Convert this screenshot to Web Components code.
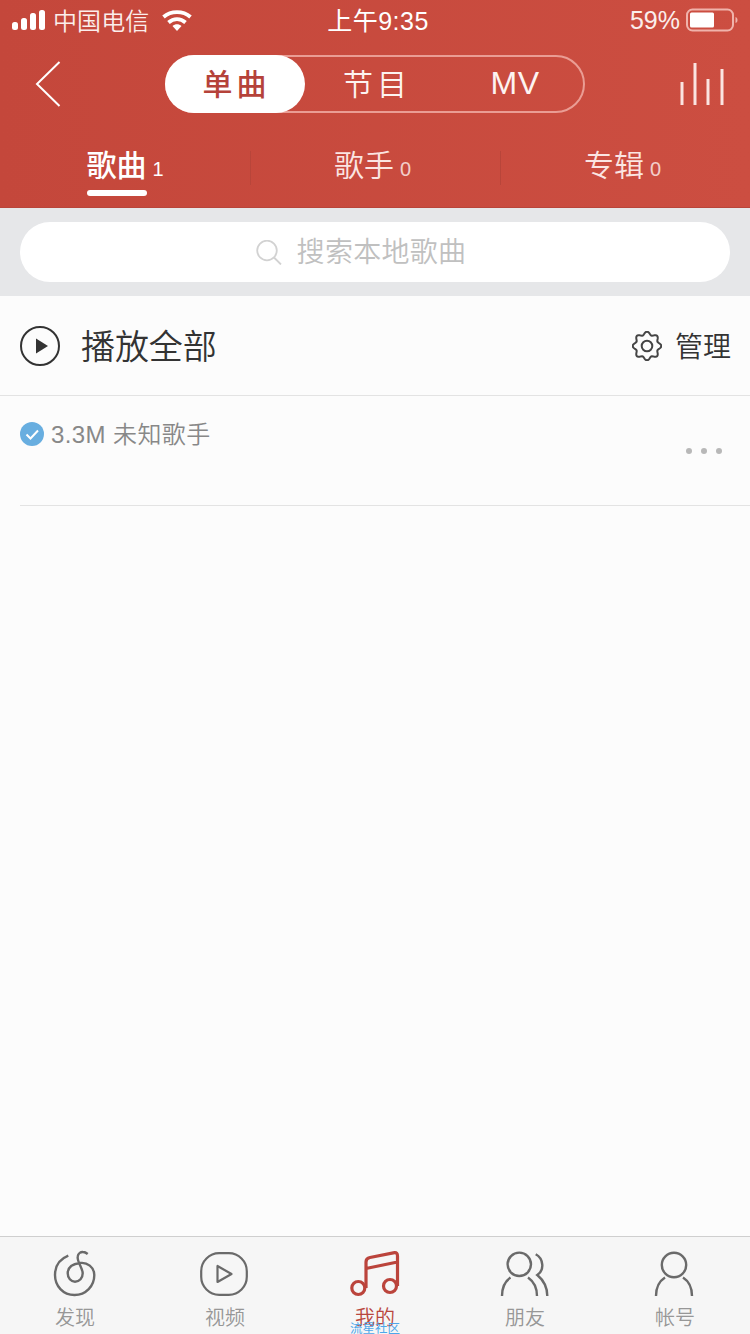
<!DOCTYPE html>
<html lang="zh"><head><meta charset="utf-8">
<style>
html,body{margin:0;padding:0}
body{width:750px;height:1334px;overflow:hidden;background:#fcfcfc;font-family:"Liberation Sans","Noto Sans CJK SC",sans-serif;font-weight:350}
</style></head><body>
<music-page></music-page>
<script>
const FONT = '"Liberation Sans","Noto Sans CJK SC",sans-serif';
function def(name, html){
  customElements.define(name, class extends HTMLElement{
    constructor(){super();this.attachShadow({mode:'open'}).innerHTML=html(this);}
  });
}
function gearPath(){
  let d='';
  for(let i=0;i<=160;i++){
    const t=i/160*Math.PI*2, r=12.8+1.5*Math.cos(8*t);
    d+=(i?'L':'M')+(15+r*Math.sin(t)).toFixed(2)+' '+(15-r*Math.cos(t)).toFixed(2);
  }
  return d+'Z';
}
def('status-bar',()=>`<style>
:host{display:grid;grid-template-columns:1fr auto 1fr;align-items:center;height:38px;color:#fff;font-size:24px;font-family:${FONT};padding:0 12px;box-sizing:border-box;margin-top:1px}
.l,.r{display:flex;align-items:center}
.r{justify-content:flex-end}
.c{font-size:25px;letter-spacing:.5px;position:relative;left:3px;top:-1px;font-weight:400}
.n{font-size:25px;margin-right:6px;color:#fbeeec}
.carrier{margin-left:7px;color:#fbeeec;letter-spacing:.1px;position:relative;top:-1px}
svg{display:block}
</style>
<div class="l"><svg width="34" height="20" viewBox="0 0 34 20"><rect x="0" y="12" width="6" height="8" rx="2.500" fill="#fff"/><rect x="9" y="8" width="6" height="12" rx="2.500" fill="#fff"/><rect x="18" y="3" width="6" height="17" rx="2.500" fill="#fff"/><rect x="27" y="0" width="6" height="20" rx="2.500" fill="#fff"/></svg>
<span class="carrier">中国电信</span>
<svg style="margin-left:13px;margin-top:-1px" width="30" height="22" viewBox="0 0 30 22" fill="none" stroke="#fff" stroke-width="3.800"><path d="M1.500 8C9 1.500 21 1.500 28.500 8"/><path d="M6.500 13.500C11.500 9 18.500 9 23.500 13.500"/><path d="M10.500 17 15 22 19.500 17C17 14.600 13 14.600 10.500 17Z" fill="#fff" stroke="none"/></svg></div>
<div class="c">上午9:35</div>
<div class="r"><span class="n">59%</span><svg width="52" height="24" viewBox="0 0 52 24"><rect x="1" y="1.500" width="46" height="21" rx="5.500" fill="none" stroke="#f0b3ab" stroke-width="2"/><rect x="4" y="4.500" width="24" height="15" rx="1.500" fill="#fff"/><path d="M49.500 9c1.500.5 2 1.500 2 3s-.5 2.500-2 3z" fill="#f0b3ab"/></svg></div>`);

def('seg-control',()=>`<style>
:host{display:flex;width:420px;height:58px;box-sizing:border-box;border:2px solid #ea9d94;border-radius:29px;font-family:${FONT};color:#fdf3f1;font-size:30px;position:relative}
div{display:flex;flex:none;width:140px;box-sizing:border-box;align-items:center;justify-content:center;letter-spacing:4px;margin:-2px 0;padding:0 0 4px 4px}
.on{background:#fff;color:#b5423a;border-radius:29px;margin-left:-2px;font-weight:500;padding:0 0 5px 3px}
.mv{font-size:32px;letter-spacing:.5px;padding-left:0;padding-bottom:2px}
</style><div class="on">单曲</div><div>节目</div><div class="mv">MV</div>`);

def('nav-bar',()=>`<style>
:host{display:flex;align-items:center;height:58px;margin-top:16px}
svg{display:block;flex:none}
.back{margin-left:34px;margin-right:104px}
.eq{margin-left:95px}
</style><svg class="back" width="27" height="46" viewBox="0 0 27 46" fill="none" stroke="#fff" stroke-width="2"><path d="M25.500 1 3 23 25.500 45"/></svg>
<seg-control></seg-control>
<svg class="eq" width="44" height="44" viewBox="0 0 44 44" stroke="#fbe4e1" stroke-width="3"><path d="M2 20V43M15 1V43M28 17V43M42 7V43"/></svg>`);

def('sub-tab',(el)=>`<style>
:host{display:block;height:68px;position:relative;font-family:${FONT};color:#fbe5e2}
.t{display:flex;justify-content:center;align-items:baseline;padding:6px 5px 0 0;line-height:40px;font-size:30px}
.n{font-size:20px;margin-left:6px;opacity:.85}
:host([active]) .t{color:#fff;font-weight:500;padding-right:0}
:host([active]) .n{font-weight:400;opacity:1}
.u{display:none;position:absolute;left:87px;top:50px;width:60px;height:6px;border-radius:3px;background:#fff}
:host([active]) .u{display:block}
.d{position:absolute;right:-1px;top:11px;width:1px;height:34px;background:#b8453a}
:host([last]) .d{display:none}
</style><div class="t"><span>${el.getAttribute('label')}</span><span class="n">${el.getAttribute('count')}</span></div><div class="u"></div><div class="d"></div>`);

def('sub-tabs',()=>`<style>:host{display:grid;grid-template-columns:repeat(3,1fr);margin-top:27px}</style>
<sub-tab active label="歌曲" count="1"></sub-tab><sub-tab label="歌手" count="0"></sub-tab><sub-tab last label="专辑" count="0"></sub-tab>`);

def('app-header',()=>`<style>:host{display:block;height:208px;box-sizing:border-box;border-bottom:1px solid #b9453a;background:linear-gradient(90deg,#c4473b,#cc4e41);overflow:hidden}</style>
<status-bar></status-bar><nav-bar></nav-bar><sub-tabs></sub-tabs>`);

def('search-box',()=>`<style>
:host{display:block;background:#e6e7e9;padding:14px 20px}
.b{height:60px;border-radius:30px;background:#fff;display:flex;align-items:center;justify-content:center;gap:15px;color:#c0c0c0;font-family:${FONT};font-size:28px;padding-right:28px}
span{letter-spacing:.3px;padding-bottom:5px}
svg{display:block;margin-top:1px}
</style><div class="b"><svg width="26" height="25" viewBox="0 0 26 25" fill="none" stroke="#d2d2d2" stroke-width="1.800"><circle cx="11" cy="10.500" r="9.800"/><path d="M18 17.500 25 24.500"/></svg><span>搜索本地歌曲</span></div>`);

def('play-row',()=>`<style>
:host{display:flex;align-items:center;height:100px;box-sizing:border-box;border-bottom:1px solid #e3e3e3;padding:0 19px 0 20px;font-family:${FONT};color:#333}
.t{font-size:34px;margin-left:21px;flex:1;padding-bottom:3px;letter-spacing:-.1px}
.m{font-size:28px;margin-left:13px;padding-bottom:2px}
svg{display:block}
</style><svg width="40" height="40" viewBox="0 0 40 40"><circle cx="20" cy="20" r="19" fill="none" stroke="#333" stroke-width="2"/><path d="M16 12.500 28 20 16 27.500Z" fill="#333"/></svg>
<span class="t">播放全部</span>
<svg width="30" height="30" viewBox="0 0 30 30" fill="none" stroke="#444" stroke-width="2" stroke-linejoin="round"><circle cx="15" cy="15" r="5.300"/><path d="${gearPath()}"/></svg>
<span class="m">管理</span>`);

def('song-row',()=>`<style>
:host{display:block;height:110px;box-sizing:border-box;margin-left:20px;border-bottom:1px solid #e3e3e3;position:relative;font-family:${FONT}}
.l{display:flex;align-items:center;padding-top:26px;color:#888;font-size:24px;line-height:24px}
.l span{margin-left:7px;letter-spacing:.4px;position:relative;top:1px}
.dots{position:absolute;right:28px;top:52px;display:flex;gap:9px}
i{display:block;width:6px;height:6px;border-radius:50%;background:#b8b8b8}
</style><div class="l"><svg width="24" height="24" viewBox="0 0 24 24"><circle cx="12" cy="12" r="12" fill="#68aee0"/><path d="M6.500 12.500 10.500 16.500 18 8.500" fill="none" stroke="#fff" stroke-width="2"/></svg><span>3.3M 未知歌手</span></div><div class="dots"><i></i><i></i><i></i></div>`);

def('tab-item',(el)=>`<style>
:host{display:flex;flex-direction:column;align-items:center;font-family:${FONT};color:#979797;font-size:20px;height:97px}
:host([active]){color:#b9473d}
.i{height:50px;margin-top:12px;display:flex;align-items:center;justify-content:center}
span{line-height:28px;margin-top:5px}
</style><div class="i"><slot></slot></div><span>${el.getAttribute('label')}</span>`);

def('tab-bar',()=>`<style>
:host{display:grid;grid-template-columns:repeat(5,1fr);height:98px;box-sizing:border-box;border-top:1px solid #cfcfcf;background:#f6f6f6;position:relative;overflow:hidden}
svg{display:block;fill:none;stroke:#6a6a6a;stroke-width:2.400;overflow:visible}
.w{position:absolute;left:350px;top:84px;font-size:12.500px;line-height:16px;color:#4ea7ea;font-family:${FONT};font-weight:400;white-space:nowrap}
</style>
<tab-item label="发现"><svg width="44" height="46" viewBox="0 0 44 46"><path d="M15.300 4.700C7 8 2 15 2 24 2 35 10 44 21.500 44 33 44 41.300 35 41.300 24 41.300 16 34 11 27 12 19 13 14.700 17 14.700 22.300 14.700 27 18 30.700 22 30.700 26.500 30.700 29.700 27 29.700 22.300 29.700 17 24 11 24.700 5.700 25 2 28 .8 30 1 32 1 33.500 2 34.700 3"/></svg></tab-item>
<tab-item label="视频"><svg style="margin-left:-2px" width="48" height="44" viewBox="0 0 48 44"><rect x="1.200" y="1.200" width="45.600" height="41.600" rx="18" stroke-width="2.200"/><path d="M17.500 14V30L31.500 22Z" stroke-linejoin="round" stroke-width="2.200"/></svg></tab-item>
<tab-item active label="我的"><svg width="48" height="46" viewBox="0 0 48 46" style="stroke:#bb443c;stroke-width:3.200"><circle cx="7.300" cy="37" r="6.500"/><circle cx="39" cy="35" r="6.500"/><path d="M15 37V11C15 8.500 16.500 7 19 6.500L43.500 1.700C45.500 1.500 46.500 2.500 46.500 5V35M15 17.500 46.500 11"/></svg></tab-item>
<tab-item label="朋友"><svg width="48" height="44" viewBox="0 0 48 44"><circle cx="18.300" cy="12.300" r="11.700"/><path d="M1 44C1 35 4.500 29 9.500 25.500M27 25.500C32 29 36 35 36 44M34.700 2.300C42.300 6.300 44 18 36.300 23 42.300 28 46.300 34.700 46.300 44"/></svg></tab-item>
<tab-item label="帐号"><svg style="margin-left:-2px" width="38" height="44" viewBox="0 0 38 44"><circle cx="19" cy="13" r="12.200"/><path d="M1 44C1 35 4.500 29 10 25.500M28 25.500C33.500 29 37 35 37 44"/></svg></tab-item>
<div class="w">流星社区</div>`);

def('music-page',()=>`<style>
:host{display:flex;flex-direction:column;height:1334px;width:750px}
main{flex:1;background:#fcfcfc}
</style><app-header></app-header><search-box></search-box><main><play-row></play-row><song-row></song-row></main><tab-bar></tab-bar>`);
</script>
</body></html>
